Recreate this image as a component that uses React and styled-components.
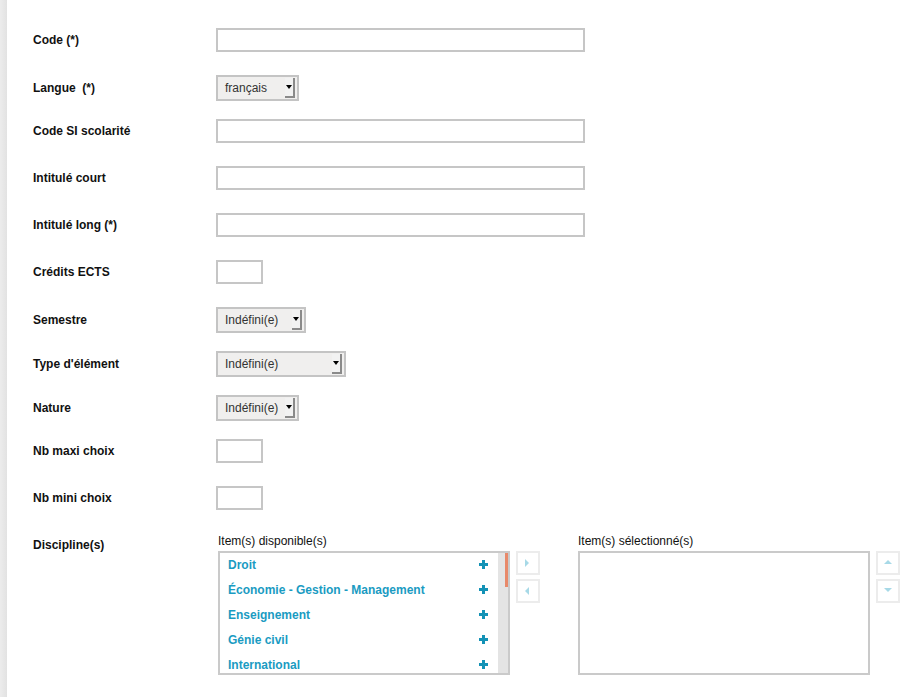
import React from "react";
import styled, { createGlobalStyle } from "styled-components";

const GlobalStyle = createGlobalStyle`
  html, body {
    margin: 0;
    padding: 0;
    background: #fff;
    font-family: "Liberation Sans", Arial, sans-serif;
  }
  * {
    box-sizing: border-box;
  }
`;

const Page = styled.div`
  display: flex;
  min-height: 697px;
  width: 915px;
  overflow: hidden;
`;

const SideStrip = styled.div`
  width: 7px;
  flex-shrink: 0;
  background: linear-gradient(to right, #ececec, #e2e2e2);
`;

const Form = styled.div`
  display: flex;
  flex-direction: column;
  padding: 28px 0 0 26px;
`;

const Row = styled.div`
  display: flex;
  align-items: ${(p) => (p.$top ? "flex-start" : "center")};
  margin-bottom: ${(p) => p.$mb || 0}px;
`;

const Label = styled.div`
  width: 183px;
  flex-shrink: 0;
  font-size: 12px;
  font-weight: bold;
  color: #111;
  line-height: 14px;
  padding-top: ${(p) => p.$pt || 0}px;
`;

const TextInput = styled.div`
  width: ${(p) => p.$w}px;
  height: 24px;
  border: 2px solid #c6c6c6;
  background: #fff;
`;

const Select = styled.div`
  width: ${(p) => p.$w}px;
  height: 26px;
  border: 2px solid #c4c4c4;
  background: #f0efee;
  display: flex;
  align-items: center;
  justify-content: space-between;
  padding: 0 2px 0 7px;
  font-size: 12px;
  color: #333;
`;

const DropButton = styled.div`
  width: 10px;
  height: 20px;
  background: #f2f2f2;
  border-right: 2px solid #8a8a8a;
  border-bottom: 2px solid #8a8a8a;
  display: flex;
  align-items: center;
  justify-content: center;
  &::after {
    content: "";
    border-left: 3px solid transparent;
    border-right: 3px solid transparent;
    border-top: 4px solid #000;
  }
`;

const DualList = styled.div`
  display: flex;
  margin-left: 2px;
`;

const Column = styled.div`
  display: flex;
  flex-direction: column;
  margin-right: ${(p) => p.$mr || 0}px;
`;

const ColTitle = styled.div`
  font-size: 12px;
  color: #111;
  line-height: 15px;
  margin-bottom: 2px;
`;

const BoxRow = styled.div`
  display: flex;
  align-items: flex-start;
`;

const ListBox = styled.div`
  width: 292px;
  height: 124px;
  border: 2px solid #cacaca;
  background: #fff;
  display: flex;
  overflow: hidden;
`;

const Items = styled.div`
  flex: 1;
  display: flex;
  flex-direction: column;
`;

const Item = styled.div`
  flex-shrink: 0;
  height: 25px;
  display: flex;
  align-items: center;
  justify-content: space-between;
  padding: 0 10px 2px 8px;
  font-size: 12px;
  font-weight: bold;
  color: #1a9bc2;
`;

const Track = styled.div`
  width: 10px;
  flex-shrink: 0;
  background: #e4e4e4;
  display: flex;
  justify-content: flex-end;
`;

const Thumb = styled.div`
  width: 3px;
  height: 34px;
  background: #e8896a;
`;

const Buttons = styled.div`
  display: flex;
  flex-direction: column;
  gap: 4px;
  margin-left: 6px;
`;

const ArrowButton = styled.div`
  width: 24px;
  height: 24px;
  border: 2px solid #ececec;
  background: #fff;
  display: flex;
  align-items: center;
  justify-content: center;
`;

const Plus = () => (
  <svg width="9" height="9" viewBox="0 0 9 9">
    <path d="M3 0h3v3h3v3H6v3H3V6H0V3h3z" fill="#1392b6" />
  </svg>
);

const Tri = ({ dir }) => {
  const d = {
    right: "M1 0L5 4L1 8z",
    left: "M5 0L1 4L5 8z",
    up: "M0 5L4 1L8 5z",
    down: "M0 1L4 5L8 1z",
  }[dir];
  return (
    <svg width="8" height="8" viewBox="0 0 8 8">
      <path d={d} fill="#a7d9e7" />
    </svg>
  );
};

const disciplines = [
  "Droit",
  "Économie - Gestion - Management",
  "Enseignement",
  "Génie civil",
  "International",
];

export default function App() {
  return (
    <>
      <GlobalStyle />
      <Page>
        <SideStrip />
        <Form>
          <Row $mb={23}>
            <Label>Code (*)</Label>
            <TextInput $w={369} />
          </Row>
          <Row $mb={18}>
            <Label>Langue&nbsp; (*)</Label>
            <Select $w={83}>
              français
              <DropButton />
            </Select>
          </Row>
          <Row $mb={23}>
            <Label>Code SI scolarité</Label>
            <TextInput $w={369} />
          </Row>
          <Row $mb={23}>
            <Label>Intitulé court</Label>
            <TextInput $w={369} />
          </Row>
          <Row $mb={23}>
            <Label>Intitulé long (*)</Label>
            <TextInput $w={369} />
          </Row>
          <Row $mb={23}>
            <Label>Crédits ECTS</Label>
            <TextInput $w={47} />
          </Row>
          <Row $mb={18}>
            <Label>Semestre</Label>
            <Select $w={90}>
              Indéfini(e)
              <DropButton />
            </Select>
          </Row>
          <Row $mb={18}>
            <Label>Type d'élément</Label>
            <Select $w={130}>
              Indéfini(e)
              <DropButton />
            </Select>
          </Row>
          <Row $mb={18}>
            <Label>Nature</Label>
            <Select $w={83}>
              Indéfini(e)
              <DropButton />
            </Select>
          </Row>
          <Row $mb={23}>
            <Label>Nb maxi choix</Label>
            <TextInput $w={47} />
          </Row>
          <Row $mb={24}>
            <Label>Nb mini choix</Label>
            <TextInput $w={47} />
          </Row>
          <Row $top>
            <Label $pt={4}>Discipline(s)</Label>
            <DualList>
              <Column $mr={38}>
                <ColTitle>Item(s) disponible(s)</ColTitle>
                <BoxRow>
                  <ListBox>
                    <Items>
                      {disciplines.map((d) => (
                        <Item key={d}>
                          {d}
                          <Plus />
                        </Item>
                      ))}
                    </Items>
                    <Track>
                      <Thumb />
                    </Track>
                  </ListBox>
                  <Buttons>
                    <ArrowButton>
                      <Tri dir="right" />
                    </ArrowButton>
                    <ArrowButton>
                      <Tri dir="left" />
                    </ArrowButton>
                  </Buttons>
                </BoxRow>
              </Column>
              <Column>
                <ColTitle>Item(s) sélectionné(s)</ColTitle>
                <BoxRow>
                  <ListBox />
                  <Buttons>
                    <ArrowButton>
                      <Tri dir="up" />
                    </ArrowButton>
                    <ArrowButton>
                      <Tri dir="down" />
                    </ArrowButton>
                  </Buttons>
                </BoxRow>
              </Column>
            </DualList>
          </Row>
        </Form>
      </Page>
    </>
  );
}
